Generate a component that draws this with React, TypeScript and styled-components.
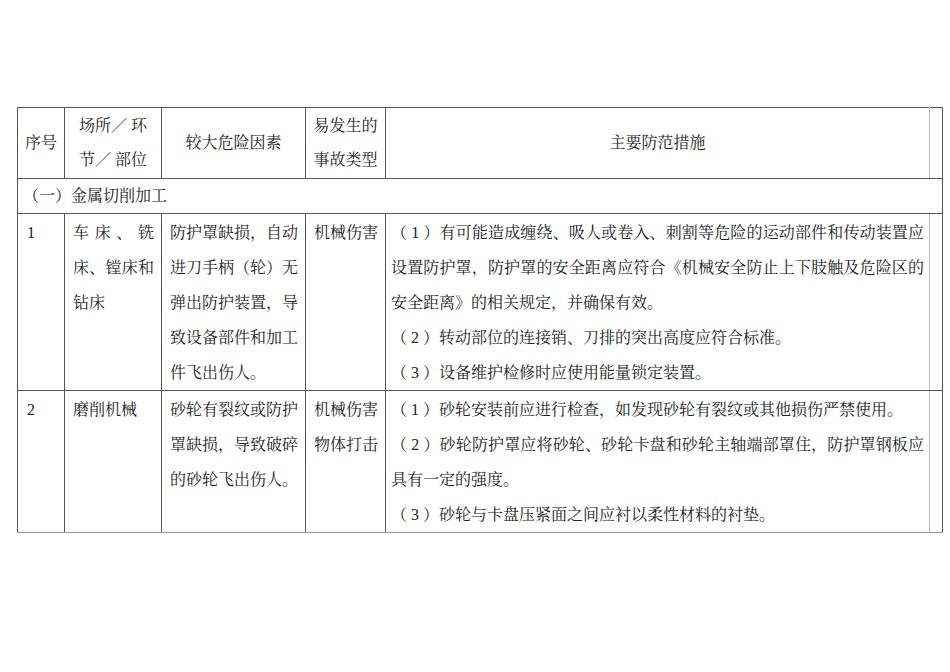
import React from 'react';
import styled, { createGlobalStyle } from 'styled-components';

const GlobalStyle = createGlobalStyle`
  html, body {
    margin: 0;
    padding: 0;
    background: #fff;
  }
  body {
    font-family: "Liberation Serif", "Noto Serif CJK SC", "Noto Sans CJK SC", serif;
    color: #222;
  }
`;

const columns = [47, 97, 144, 80, 544, 13];

const Page = styled.div`
  box-sizing: border-box;
  width: 950px;
  height: 672px;
  padding: 107px 0 0 17px;
`;

const Table = styled.table`
  border-collapse: collapse;
  table-layout: fixed;
  width: 925px;
  font-size: 16px;
`;

const Col = styled.col<{ $w: number }>`
  width: ${(p) => p.$w}px;
`;

const Row = styled.tr<{ $h: number; $last?: boolean }>`
  height: ${(p) => p.$h}px;
  & > td {
    border-bottom-color: ${(p) => (p.$last ? '#999' : '#555')};
  }
`;

const HeadCell = styled.td<{ $soft?: boolean }>`
  border: 1px solid #555;
  ${(p) => (p.$soft ? 'border-right-color: #bbb;' : '')}
  padding: 0;
  text-align: center;
  vertical-align: middle;
  line-height: 34px;
`;

const Cell = styled.td<{ $padLeft?: number; $padRight?: number; $soft?: boolean }>`
  border: 1px solid #555;
  ${(p) => (p.$soft ? 'border-right-color: #bbb;' : '')}
  padding: 1px ${(p) => p.$padRight ?? 7}px 0 ${(p) => p.$padLeft ?? 8}px;
  vertical-align: top;
  text-align: justify;
  line-height: 35px;
  line-break: strict;
`;

const SectionCell = styled.td`
  border: 1px solid #555;
  padding: 0 5px;
  vertical-align: middle;
  line-height: 34px;
`;

const Line = styled.span<{ $fill?: boolean }>`
  display: block;
  white-space: nowrap;
  text-align: ${(p) => (p.$fill ? 'justify' : 'left')};
  text-align-last: ${(p) => (p.$fill ? 'justify' : 'left')};
`;

const Edge = styled.td`
  border: 1px solid #555;
  padding: 0;
`;

type Measure = { text: string; fill?: boolean };

const MeasureCell = ({ lines }: { lines: Measure[] }) => (
  <Cell $padLeft={5} $padRight={5} $soft>
    {lines.map((l, i) => (
      <Line key={i} $fill={l.fill}>
        {l.text}
      </Line>
    ))}
  </Cell>
);

const App = () => {
  return (
    <Page>
      <GlobalStyle />
      <Table>
        <colgroup>
          {columns.map((w, i) => (
            <Col key={i} $w={w} />
          ))}
        </colgroup>
        <tbody>
          <Row $h={71}>
            <HeadCell>序号</HeadCell>
            <HeadCell>
              场所／ 环<br />节／ 部位
            </HeadCell>
            <HeadCell>较大危险因素</HeadCell>
            <HeadCell>
              易发生的<br />事故类型
            </HeadCell>
            <HeadCell $soft>主要防范措施</HeadCell>
            <Edge />
          </Row>
          <Row $h={35}>
            <SectionCell colSpan={6}>（一）金属切削加工</SectionCell>
          </Row>
          <Row $h={177}>
            <Cell $padLeft={9}>1</Cell>
            <Cell>车床、铣床、镗床和钻床</Cell>
            <Cell>防护罩缺损，自动进刀手柄（轮）无弹出防护装置，导致设备部件和加工件飞出伤人。</Cell>
            <Cell>机械伤害</Cell>
            <MeasureCell
              lines={[
                { text: '（ 1 ）有可能造成缠绕、吸人或卷入、刺割等危险的运动部件和传动装置应', fill: true },
                { text: '设置防护罩，防护罩的安全距离应符合《机械安全防止上下肢触及危险区的', fill: true },
                { text: '安全距离》的相关规定，并确保有效。' },
                { text: '（ 2 ）转动部位的连接销、刀排的突出高度应符合标准。' },
                { text: '（ 3 ）设备维护检修时应使用能量锁定装置。' },
              ]}
            />
            <Edge />
          </Row>
          <Row $h={142} $last>
            <Cell $padLeft={9}>2</Cell>
            <Cell>磨削机械</Cell>
            <Cell>砂轮有裂纹或防护罩缺损，导致破碎的砂轮飞出伤人。</Cell>
            <Cell>
              机械伤害
              <br />
              物体打击
            </Cell>
            <MeasureCell
              lines={[
                { text: '（ 1 ）砂轮安装前应进行检查，如发现砂轮有裂纹或其他损伤严禁使用。' },
                { text: '（ 2 ）砂轮防护罩应将砂轮、砂轮卡盘和砂轮主轴端部罩住，防护罩钢板应', fill: true },
                { text: '具有一定的强度。' },
                { text: '（ 3 ）砂轮与卡盘压紧面之间应衬以柔性材料的衬垫。' },
              ]}
            />
            <Edge />
          </Row>
        </tbody>
      </Table>
    </Page>
  );
};

export default App;
